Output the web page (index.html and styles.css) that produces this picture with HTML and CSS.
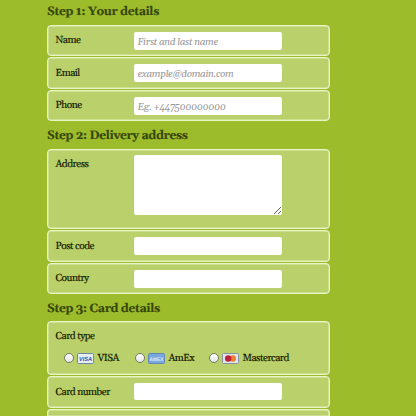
FILE: index.html
```
<!DOCTYPE html>
<html lang="en">
<head>
<meta charset="utf-8">
<title>Payment form</title>
<link rel="stylesheet" href="styles.css">
</head>
<body>
<form class="payment">
  <h1>Step 1: Your details</h1>
  <div class="rows">
    <div class="row"><label for="name">Name</label><input id="name" placeholder="First and last name"></div>
    <div class="row"><label for="email">Email</label><input id="email" placeholder="example@domain.com"></div>
    <div class="row"><label for="phone">Phone</label><input id="phone" placeholder="Eg. +447500000000"></div>
  </div>
  <h1>Step 2: Delivery address</h1>
  <div class="rows">
    <div class="row tall"><label for="address">Address</label><textarea id="address"></textarea></div>
    <div class="row"><label for="postcode">Post code</label><input id="postcode"></div>
    <div class="row"><label for="country">Country</label><input id="country"></div>
  </div>
  <h1 class="short">Step 3: Card details</h1>
  <div class="rows">
    <div class="row cards">
      <span class="legend">Card type</span>
      <div class="choices">
        <label class="choice"><input type="radio" name="card">
          <svg width="17" height="11" viewBox="0 0 17 11"><rect x=".5" y=".5" width="16" height="10" rx="1" fill="#e4eef0" stroke="#7185a8"/><text x="2" y="7.9" textLength="13" lengthAdjust="spacingAndGlyphs" class="mark visa">VISA</text></svg>
          <span>VISA</span></label>
        <label class="choice"><input type="radio" name="card">
          <svg width="17" height="11" viewBox="0 0 17 11"><rect x=".5" y=".5" width="16" height="10" rx="1" fill="#79a9dc" stroke="#6388b8"/><text x="1.5" y="7.5" textLength="14" lengthAdjust="spacingAndGlyphs" class="mark amex">AMEX</text></svg>
          <span>AmEx</span></label>
        <label class="choice"><input type="radio" name="card">
          <svg width="17" height="11" viewBox="0 0 17 11"><rect x=".5" y=".5" width="16" height="10" rx="1" fill="#dfe6ea" stroke="#8792a2"/><circle cx="10.8" cy="5.5" r="3.2" fill="#ee7d2c"/><circle cx="6.2" cy="5.5" r="3.2" fill="#bd2038"/></svg>
          <span>Mastercard</span></label>
      </div>
    </div>
    <div class="row"><label for="number">Card number</label><input id="number"></div>
    <div class="row last"></div>
  </div>
</form>
</body>
</html>
```
FILE: styles.css
```
* { box-sizing: border-box; }
html { height: 100%; overflow: hidden; }
body {
  margin: 0;
  height: 100%;
  overflow: hidden;
  background: #9cbc2c;
  color: #141a00;
  font: 10.2px/14px Georgia, Gelasio, "DejaVu Serif Condensed", "DejaVu Serif", serif;
  letter-spacing: -.5px;
  text-rendering: geometricPrecision;
  -webkit-text-stroke: .15px;
}
.payment { width: 283px; margin-left: 47px; }
h1 {
  margin: 0;
  height: 28px;
  padding-top: 8px;
  font-size: 12px;
  line-height: 15px;
  letter-spacing: -.34px;
  color: #36460a;
}
h1:first-child { height: 25px; padding-top: 5px; }
h1.short { height: 27px; }
.row {
  display: flex;
  align-items: flex-start;
  height: 31px;
  margin-bottom: 2px;
  padding: 6px 7px 0 7.5px;
  border: 1px solid #e9f4c7;
  border-radius: 4px;
  background: #b9d06b;
  box-shadow: inset 0 0 0 .5px #e0edb4;
}
.row:first-child { margin-bottom: 1px; }
.row:nth-child(2) { height: 32px; margin-bottom: 1px; }
.row:last-child { margin-bottom: 0; }
.row > label { width: 78px; padding-top: 2px; }
.row:nth-child(2) > label { padding-top: 3px; }
.row > input, textarea {
  width: 148.5px;
  height: 18px;
  margin: 0;
  padding: 1px 4px 0;
  border: 0;
  border-radius: 2px;
  background: #fff;
  font: italic 10px/17px Georgia, Gelasio, "DejaVu Serif Condensed", "DejaVu Serif", serif;
  letter-spacing: -.38px;
}
input::placeholder { color: #999; opacity: 1; -webkit-text-stroke: 0; }
.row.tall { height: 80px; padding-top: 5px; }
.tall > label { padding-top: 3px; }
textarea { height: 60px; resize: both; }
.row.cards { display: block; height: 54px; padding-top: 8px; }
.cards + .row { margin-bottom: 1px; }
.cards + .row > input { height: 17px; }
.legend { display: block; }
.choices { display: flex; margin: 7px 0 0 8px; }
.choice { display: flex; align-items: center; height: 14px; margin-right: 15px; }
.choice span { padding-top: 1px; }
.choice:nth-child(1) { width: 56px; }
.choice:nth-child(2) { width: 59px; }
.choice:nth-child(3) { margin-right: 0; }
.choice input {
  appearance: none;
  flex: none;
  width: 10px;
  height: 10px;
  margin: 0 3px 0 0;
  border: 1px solid #737d66;
  border-radius: 50%;
  background: linear-gradient(#ffffff, #e2e5e2);
}
.choice svg { display: block; flex: none; margin-right: 4px; }
.mark { font: bold 6px "Liberation Sans", sans-serif; letter-spacing: 0; }
.visa { fill: #3559a8; font-style: italic; }
.amex { fill: #d8ebfa; font-size: 5px; }
.row.last { height: 7px; border-bottom: 0; border-radius: 4px 4px 0 0; }
```
